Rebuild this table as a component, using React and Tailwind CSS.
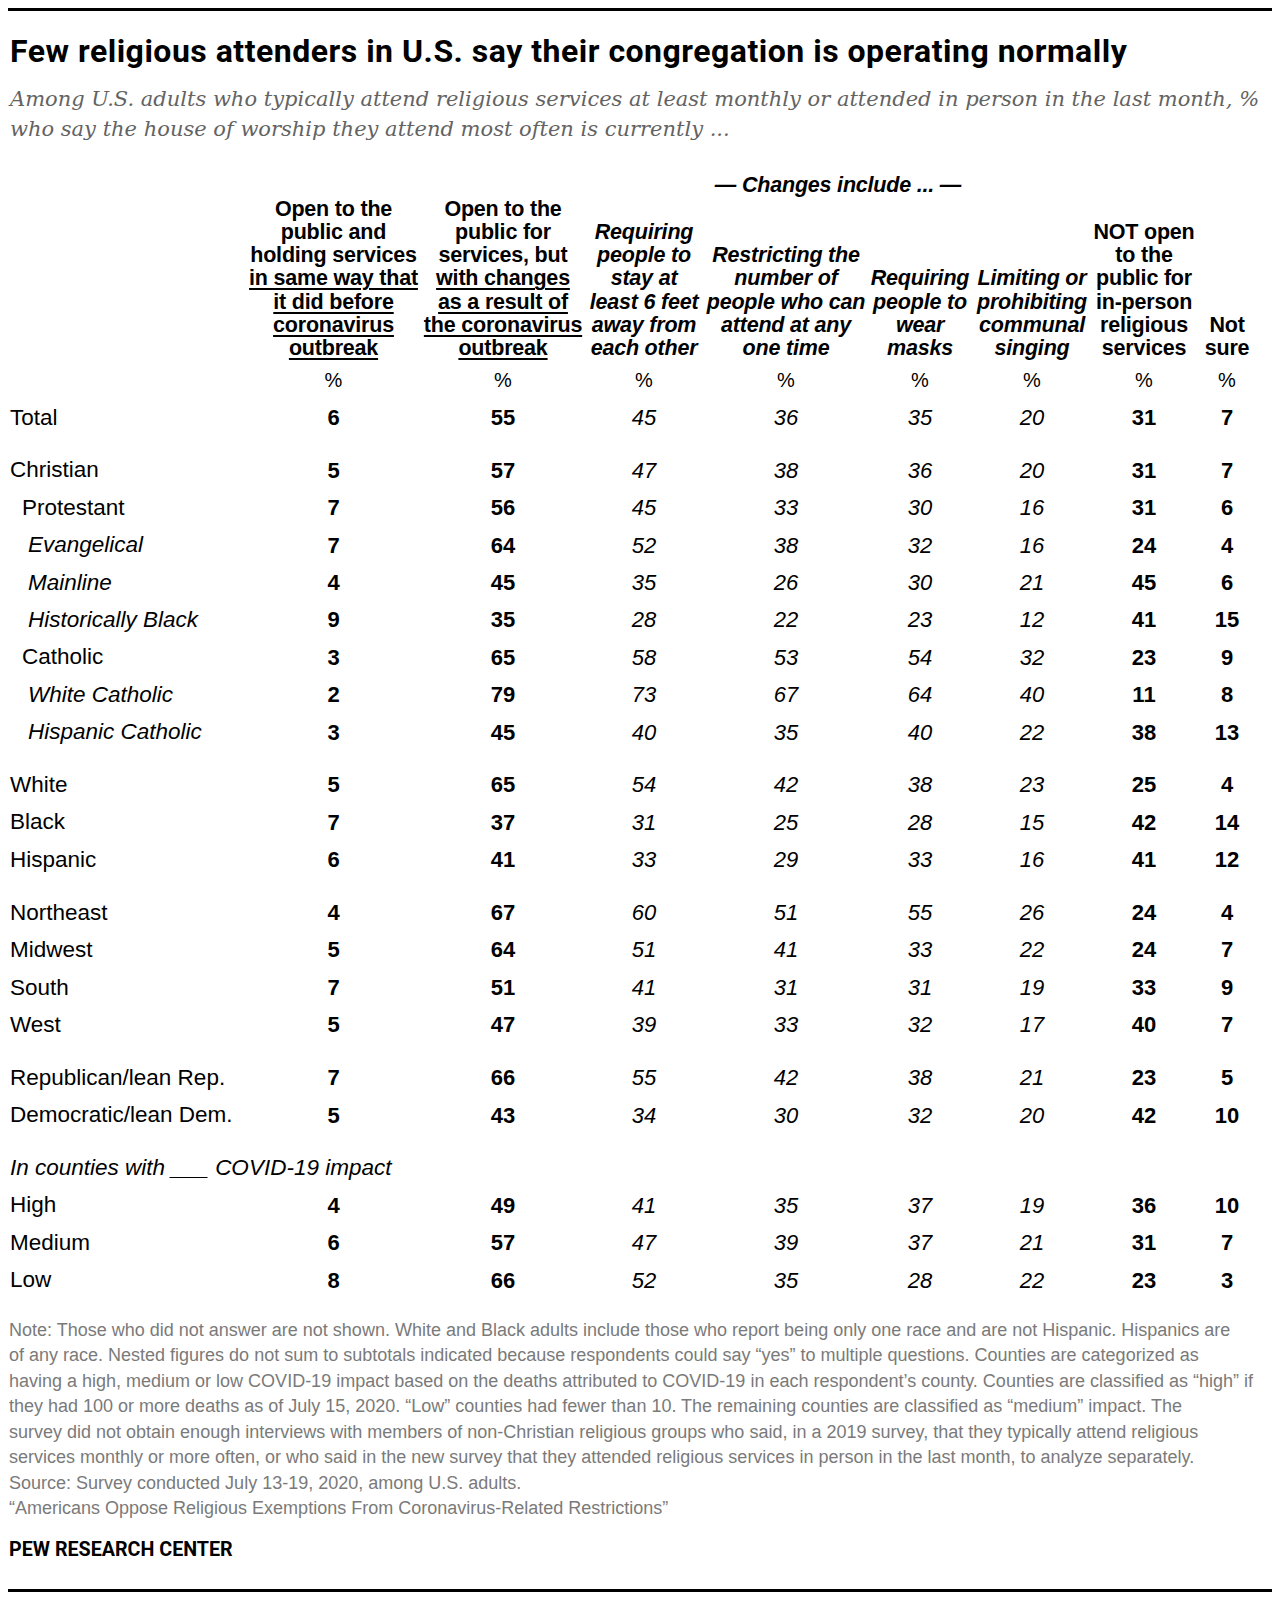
import React from "react";

const head = "font-['Liberation_Sans','Arial',sans-serif]";
const sans = "font-['Liberation_Sans','Arial',sans-serif]";

const rows = [
  { label: "Total", v: [6, 55, 45, 36, 35, 20, 31, 7] },
  { gap: true },
  { label: "Christian", v: [5, 57, 47, 38, 36, 20, 31, 7] },
  { label: "Protestant", indent: 1, v: [7, 56, 45, 33, 30, 16, 31, 6] },
  { label: "Evangelical", indent: 2, v: [7, 64, 52, 38, 32, 16, 24, 4] },
  { label: "Mainline", indent: 2, v: [4, 45, 35, 26, 30, 21, 45, 6] },
  { label: "Historically Black", indent: 2, v: [9, 35, 28, 22, 23, 12, 41, 15] },
  { label: "Catholic", indent: 1, v: [3, 65, 58, 53, 54, 32, 23, 9] },
  { label: "White Catholic", indent: 2, v: [2, 79, 73, 67, 64, 40, 11, 8] },
  { label: "Hispanic Catholic", indent: 2, v: [3, 45, 40, 35, 40, 22, 38, 13] },
  { gap: true },
  { label: "White", v: [5, 65, 54, 42, 38, 23, 25, 4] },
  { label: "Black", v: [7, 37, 31, 25, 28, 15, 42, 14] },
  { label: "Hispanic", v: [6, 41, 33, 29, 33, 16, 41, 12] },
  { gap: true },
  { label: "Northeast", v: [4, 67, 60, 51, 55, 26, 24, 4] },
  { label: "Midwest", v: [5, 64, 51, 41, 33, 22, 24, 7] },
  { label: "South", v: [7, 51, 41, 31, 31, 19, 33, 9] },
  { label: "West", v: [5, 47, 39, 33, 32, 17, 40, 7] },
  { gap: true },
  { label: "Republican/lean Rep.", v: [7, 66, 55, 42, 38, 21, 23, 5] },
  { label: "Democratic/lean Dem.", v: [5, 43, 34, 30, 32, 20, 42, 10] },
  { gap: true },
  { label: "In counties with ___ COVID-19 impact", heading: true },
  { label: "High", v: [4, 49, 41, 35, 37, 19, 36, 10] },
  { label: "Medium", v: [6, 57, 47, 39, 37, 21, 31, 7] },
  { label: "Low", v: [8, 66, 52, 35, 28, 22, 23, 3] },
];

const notes = [
  "Note: Those who did not answer are not shown. White and Black adults include those who report being only one race and are not Hispanic. Hispanics are",
  "of any race. Nested figures do not sum to subtotals indicated because respondents could say \u201cyes\u201d to multiple questions. Counties are categorized as",
  "having a high, medium or low COVID-19 impact based on the deaths attributed to COVID-19 in each respondent\u2019s county. Counties are classified as \u201chigh\u201d if",
  "they had 100 or more deaths as of July 15, 2020. \u201cLow\u201d counties had fewer than 10. The remaining counties are classified as \u201cmedium\u201d impact. The",
  "survey did not obtain enough interviews with members of non-Christian religious groups who said, in a 2019 survey, that they typically attend religious",
  "services monthly or more often, or who said in the new survey that they attended religious services in person in the last month, to analyze separately.",
  "Source: Survey conducted July 13-19, 2020, among U.S. adults.",
  "\u201cAmericans Oppose Religious Exemptions From Coronavirus-Related Restrictions\u201d",
];

const gridCols =
  "grid grid-cols-[235px_177px_162px_120px_164px_104px_120px_104px_62px]";

// which data columns are bold (the rest are italic)
const boldCol = [true, true, false, false, false, false, true, true];

function U({ children }) {
  return (
    <span className="underline decoration-2 underline-offset-[3px]">{children}</span>
  );
}

function Head({ lines, italic }) {
  return (
    <div
      className={`flex flex-col items-center text-center text-[21.5px] leading-[23.2px] font-bold tracking-[-0.2px] ${
        italic ? "italic" : ""
      }`}
    >
      {lines.map((l, i) => (
        <div key={i} className="whitespace-nowrap">
          {l}
        </div>
      ))}
    </div>
  );
}

export default function App() {
  return (
    <div className="w-[1280px] h-[1598px] bg-white text-black px-[8px] pt-[8px] flex flex-col">
      <div className="border-t-[3px] border-black" />

      <h1 className="font-['Roboto',sans-serif] mt-[23px] pl-[2px] text-[32px] leading-[34px] font-bold tracking-[0.5px]">
        Few religious attenders in U.S. say their congregation is operating normally
      </h1>
      <p className="mt-[16px] pl-[2px] font-['DejaVu_Serif',serif] italic text-[21px] leading-[30px] text-[#636363] whitespace-nowrap">
        Among U.S. adults who typically attend religious services at least monthly or attended in person in the last month, %
        <br />
        who say the house of worship they attend most often is currently ...
      </p>

      {/* Column headers */}
      <div className={`${gridCols} ${head} mt-[30px] pl-[2px] grid-rows-[47px_auto]`}>
        <div className="row-span-2" />
        <div className="row-span-2 self-end">
          <Head
            lines={[
              "Open to the",
              "public and",
              "holding services",
              <U>in same way that</U>,
              <U>it did before</U>,
              <U>coronavirus</U>,
              <U>outbreak</U>,
            ]}
          />
        </div>
        <div className="row-span-2 self-end">
          <Head
            lines={[
              "Open to the",
              "public for",
              "services, but",
              <U>with changes</U>,
              <U>as a result of</U>,
              <U>the coronavirus</U>,
              <U>outbreak</U>,
            ]}
          />
        </div>
        <div className="col-span-4 self-start text-center text-[21.5px] leading-[23.2px] font-bold italic tracking-[-0.2px]">
          &mdash; Changes include ... &mdash;
        </div>
        <div className="row-span-2 self-end col-start-8 row-start-1">
          <Head lines={["NOT open", "to the", "public for", "in-person", "religious", "services"]} />
        </div>
        <div className="row-span-2 self-end col-start-9 row-start-1">
          <Head lines={["Not", "sure"]} />
        </div>
        <div className="col-start-4 row-start-2 self-end">
          <Head italic lines={["Requiring", "people to", "stay at", "least 6 feet", "away from", "each other"]} />
        </div>
        <div className="col-start-5 row-start-2 self-end">
          <Head italic lines={["Restricting the", "number of", "people who can", "attend at any", "one time"]} />
        </div>
        <div className="col-start-6 row-start-2 self-end">
          <Head italic lines={["Requiring", "people to", "wear", "masks"]} />
        </div>
        <div className="col-start-7 row-start-2 self-end">
          <Head italic lines={["Limiting or", "prohibiting", "communal", "singing"]} />
        </div>
      </div>

      {/* Percent row */}
      <div className={`${gridCols} mt-[2px] pl-[2px] h-[36.5px] items-center ${head} text-[20px]`}>
        <div />
        {boldCol.map((_, i) => (
          <div key={i} className="text-center">
            %
          </div>
        ))}
      </div>

      {/* Data rows */}
      <div className="flex flex-col pl-[2px]">
        {rows.map((r, i) => {
          if (r.gap) return <div key={i} className="h-[15.5px]" />;
          if (r.heading)
            return (
              <div key={i} className={`${sans} italic h-[37.4px] flex items-center text-[22.5px]`}>
                {r.label}
              </div>
            );
          const pad = r.indent === 1 ? "pl-[12px]" : r.indent === 2 ? "pl-[18px] italic" : "";
          return (
            <div key={i} className={`${gridCols} h-[37.4px] items-center`}>
              <div className={`${sans} text-[22.5px] whitespace-nowrap ${pad}`}>{r.label}</div>
              {r.v.map((n, j) => (
                <div
                  key={j}
                  className={`${head} text-center text-[22px] ${boldCol[j] ? "font-bold" : "italic"}`}
                >
                  {n}
                </div>
              ))}
            </div>
          );
        })}
      </div>

      {/* Notes */}
      <div className={`${sans} mt-[19px] pl-[1px] text-[18px] leading-[25.5px] text-[#7a7a7a] whitespace-nowrap`}>
        {notes.map((n, i) => (
          <div key={i}>{n}</div>
        ))}
      </div>

      <div className="font-['Roboto',sans-serif] mt-[17px] pl-[1px] text-[19.7px] leading-[22px] font-bold">
        PEW RESEARCH CENTER
      </div>

      <div className="mt-auto mb-[6px] border-t-[3px] border-black" />
    </div>
  );
}
